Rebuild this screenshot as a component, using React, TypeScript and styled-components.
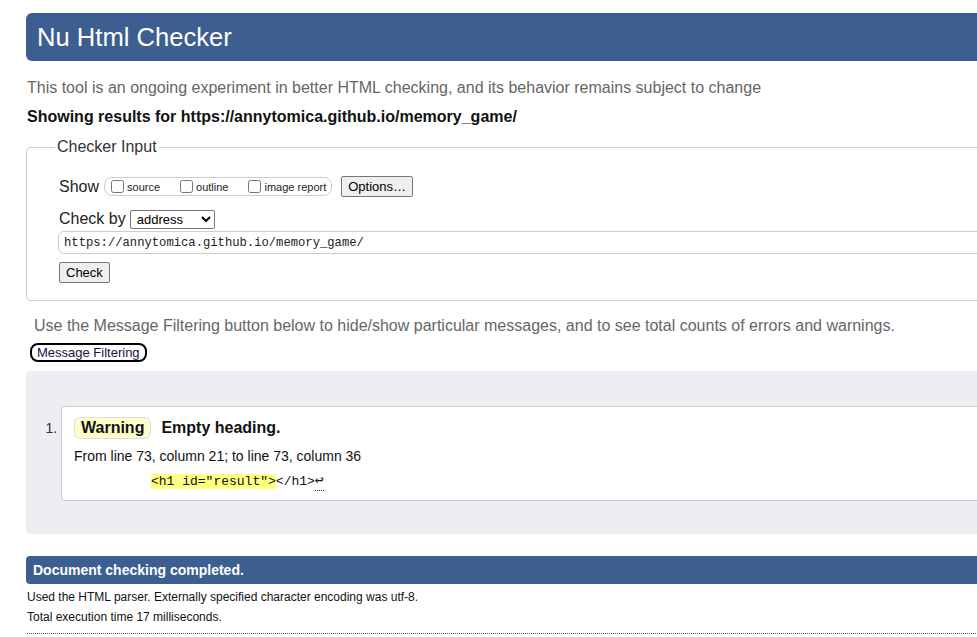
import React from 'react';
import styled, { createGlobalStyle } from 'styled-components';

const GlobalStyle = createGlobalStyle`
  html, body {
    margin: 0;
    padding: 0;
    overflow: hidden;
    background: #fff;
    font-family: "Liberation Sans", Arial, sans-serif;
    color: #111;
  }
`;

const BLUE = '#3d5e91';

function App() {
  const url = 'https://annytomica.github.io/memory_game/';

  return (
    <>
      <GlobalStyle />
      <Page>
        <Header>Nu Html Checker</Header>
        <Intro>
          This tool is an ongoing experiment in better HTML checking, and its
          behavior remains subject to change
        </Intro>
        <Showing>Showing results for {url}</Showing>

        <Fieldset>
          <Legend>Checker Input</Legend>
          <ShowRow>
            <FieldLabel>Show</FieldLabel>
            <CheckGroup>
              <CheckItem>
                <Checkbox type="checkbox" />
                source
              </CheckItem>
              <CheckItem>
                <Checkbox type="checkbox" />
                outline
              </CheckItem>
              <CheckItem $last>
                <Checkbox type="checkbox" />
                image report
              </CheckItem>
            </CheckGroup>
            <NativeButton type="button" $gap={9}>
              Options…
            </NativeButton>
          </ShowRow>
          <CheckByRow>
            <FieldLabel>Check by</FieldLabel>
            <Select defaultValue="address">
              <option value="address">address</option>
              <option value="file">file upload</option>
              <option value="text">text input</option>
            </Select>
          </CheckByRow>
          <UrlInput type="url" defaultValue={url} />
          <SubmitRow>
            <NativeButton type="button">Check</NativeButton>
          </SubmitRow>
        </Fieldset>

        <FilterHint>
          Use the Message Filtering button below to hide/show particular
          messages, and to see total counts of errors and warnings.
        </FilterHint>
        <FilterButton type="button">Message Filtering</FilterButton>

        <Results>
          <MessageList>
            <MessageItem>
              <Card>
                <MessageTitle>
                  <Badge>Warning</Badge>
                  <span>Empty heading.</span>
                </MessageTitle>
                <Location>
                  From line 73, column 21; to line 73, column 36
                </Location>
                <Extract>
                  <Highlight>&lt;h1 id="result"&gt;</Highlight>
                  &lt;/h1&gt;
                  <LineBreak>↩</LineBreak>
                </Extract>
              </Card>
            </MessageItem>
          </MessageList>
        </Results>

        <Completed>Document checking completed.</Completed>
        <Details>
          Used the HTML parser. Externally specified character encoding was
          utf-8.
        </Details>
        <Details>Total execution time 17 milliseconds.</Details>
        <Rule />
      </Page>
    </>
  );
}

const Page = styled.main`
  width: 1020px;
  margin-left: 26px;
  padding-top: 13px;
`;

const Header = styled.h1`
  margin: 0;
  height: 48px;
  display: flex;
  align-items: center;
  padding-left: 11px;
  background: ${BLUE};
  color: #fff;
  border-radius: 6px 0 0 6px;
  font-size: 25.6px;
  font-weight: normal;
`;

const Intro = styled.p`
  margin: 18px 0 0 1px;
  line-height: 18px;
  font-size: 16px;
  color: #666;
`;

const Showing = styled.p`
  margin: 11px 0 0 1px;
  line-height: 18px;
  font-size: 16px;
  font-weight: bold;
  color: #111;
`;

const Fieldset = styled.fieldset`
  margin: 12px 0 0;
  padding: 20px 0 17px 32px;
  border: 1px solid #ccc;
  border-radius: 4px;
  display: flex;
  flex-direction: column;
  align-items: flex-start;
  min-width: 0;
`;

const Legend = styled.legend`
  margin-left: -4px;
  padding: 0 2px;
  font-size: 16px;
  line-height: 18px;
  color: #333;
`;

const FieldLabel = styled.span`
  font-size: 16px;
  color: #222;
`;

const ShowRow = styled.div`
  display: flex;
  align-items: center;
  height: 21px;
`;

const CheckGroup = styled.div`
  display: flex;
  align-items: center;
  height: 17px;
  margin-left: 5px;
  padding: 0 5px 0 6px;
  border: 1px solid #ccc;
  border-radius: 8px;
`;

const CheckItem = styled.label<{ $last?: boolean }>`
  display: flex;
  align-items: center;
  font-size: 11px;
  color: #222;
  margin-right: ${(p) => (p.$last ? '0' : '20px')};
`;

const Checkbox = styled.input`
  width: 13px;
  height: 13px;
  margin: 0 3px 0 0;
`;

const NativeButton = styled.button<{ $gap?: number }>`
  font-family: "Liberation Sans", Arial, sans-serif;
  font-size: 13px;
  height: 21px;
  padding: 0 6px;
  margin-left: ${(p) => p.$gap ?? 0}px;
  background: #efefef;
  border: 1px solid #767676;
  border-radius: 2px;
  color: #000;
`;

const CheckByRow = styled.div`
  display: flex;
  align-items: center;
  margin-top: 12px;
  height: 20px;
`;

const Select = styled.select`
  margin-left: 4px;
  width: 85px;
  height: 19px;
  font-family: "Liberation Sans", Arial, sans-serif;
  font-size: 13px;
  padding: 0 2px;
  border: 1px solid #767676;
  border-radius: 2px;
  background: #fff;
  color: #000;
`;

const UrlInput = styled.input`
  box-sizing: border-box;
  margin: 2px 0 0 -1px;
  width: calc(100% + 1px);
  height: 23px;
  padding: 0 5px;
  border: 1px solid #ccc;
  border-radius: 6px;
  font-family: "Liberation Mono", "DejaVu Sans Mono", monospace;
  font-size: 12.2px;
  color: #222;
`;

const SubmitRow = styled.div`
  display: flex;
  margin-top: 8px;
`;

const FilterHint = styled.p`
  margin: 16px 0 0 8px;
  line-height: 18px;
  font-size: 16px;
  color: #666;
`;

const FilterButton = styled.button`
  margin: 8px 0 0 4px;
  height: 19px;
  padding: 0 5px;
  background: #fff;
  border: 2px solid #000;
  border-radius: 8px;
  font-family: "Liberation Sans", Arial, sans-serif;
  font-size: 13px;
  color: #1b1040;
  display: flex;
  align-items: center;
`;

const Results = styled.section`
  margin-top: 9px;
  padding: 35px 0 33px;
  background: #edeef2;
  border-radius: 4px 0 0 4px;
`;

const MessageList = styled.ol`
  margin: 0;
  padding-left: 35px;
  font-size: 13px;
  color: #333;
`;

const MessageItem = styled.li`
  &::marker {
    font-size: 14px;
  }
`;

const Card = styled.div`
  background: #fff;
  border: 1px solid #ccc;
  border-radius: 4px;
  padding: 10px 12px 10px;
  color: #111;
`;

const MessageTitle = styled.div`
  display: flex;
  align-items: center;
  gap: 10px;
  font-size: 16px;
  font-weight: bold;
  height: 22px;
`;

const Badge = styled.span`
  padding: 0 6px;
  height: 20px;
  display: flex;
  align-items: center;
  background: #ffffcc;
  border: 1px solid #ddd;
  border-radius: 6px;
`;

const Location = styled.p`
  margin: 9px 0 0;
  line-height: 16px;
  font-size: 14px;
  color: #111;
`;

const Extract = styled.code`
  display: block;
  margin: 10px 0 0 77px;
  line-height: 16px;
  font-family: "Liberation Mono", "DejaVu Sans Mono", monospace;
  font-size: 13px;
  color: #111;
`;

const Highlight = styled.mark`
  background: #ffff80;
  color: #111;
`;

const LineBreak = styled.span`
  font-size: 15px;
  border-bottom: 1px dotted #333;
`;

const Completed = styled.h2`
  margin: 22px 0 0;
  height: 28px;
  display: flex;
  align-items: center;
  padding-left: 7px;
  background: ${BLUE};
  color: #fff;
  border-radius: 4px 0 0 4px;
  font-size: 14px;
  font-weight: bold;
`;

const Details = styled.p`
  margin: 6px 0 0 1px;
  line-height: 14px;
  font-size: 12px;
  color: #111;
  & + & {
    margin-top: 6px;
  }
`;

const Rule = styled.hr`
  margin: 9px 0 0 1px;
  border: 0;
  border-top: 1px dotted #555;
`;

export default App;
